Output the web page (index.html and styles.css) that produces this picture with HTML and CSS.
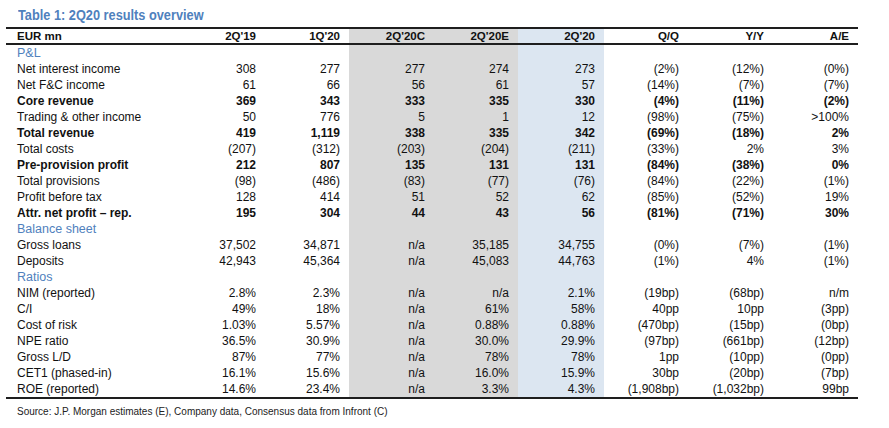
FILE: index.html
```html
<!DOCTYPE html>
<html lang="en">
<head>
<meta charset="utf-8">
<title>Table 1: 2Q20 results overview</title>
<link rel="stylesheet" href="styles.css">
</head>
<body>
<div class="title"><span class="title-text">Table 1: 2Q20 results overview</span></div>
<table class="results">
  <colgroup>
    <col class="col-label">
    <col class="col-n85">
    <col class="col-n84">
    <col class="col-n85 shade-gray">
    <col class="col-n84 shade-gray">
    <col class="col-n86 shade-blue">
    <col class="col-n84">
    <col class="col-n85">
    <col class="col-n85">
  </colgroup>
  <thead>
    <tr>
      <th class="label">EUR mn</th><th>2Q'19</th><th>1Q'20</th><th>2Q'20C</th><th>2Q'20E</th><th>2Q'20</th><th>Q/Q</th><th>Y/Y</th><th>A/E</th>
    </tr>
  </thead>
  <tbody>
    <tr class="section"><td class="label">P&amp;L</td><td></td><td></td><td></td><td></td><td></td><td></td><td></td><td></td></tr>
    <tr><td class="label">Net interest income</td><td>308</td><td>277</td><td>277</td><td>274</td><td>273</td><td>(2%)</td><td>(12%)</td><td>(0%)</td></tr>
    <tr><td class="label">Net F&amp;C income</td><td>61</td><td>66</td><td>56</td><td>61</td><td>57</td><td>(14%)</td><td>(7%)</td><td>(7%)</td></tr>
    <tr class="strong"><td class="label">Core revenue</td><td>369</td><td>343</td><td>333</td><td>335</td><td>330</td><td>(4%)</td><td>(11%)</td><td>(2%)</td></tr>
    <tr><td class="label">Trading &amp; other income</td><td>50</td><td>776</td><td>5</td><td>1</td><td>12</td><td>(98%)</td><td>(75%)</td><td>&gt;100%</td></tr>
    <tr class="strong"><td class="label">Total revenue</td><td>419</td><td>1,119</td><td>338</td><td>335</td><td>342</td><td>(69%)</td><td>(18%)</td><td>2%</td></tr>
    <tr><td class="label">Total costs</td><td>(207)</td><td>(312)</td><td>(203)</td><td>(204)</td><td>(211)</td><td>(33%)</td><td>2%</td><td>3%</td></tr>
    <tr class="strong"><td class="label">Pre-provision profit</td><td>212</td><td>807</td><td>135</td><td>131</td><td>131</td><td>(84%)</td><td>(38%)</td><td>0%</td></tr>
    <tr><td class="label">Total provisions</td><td>(98)</td><td>(486)</td><td>(83)</td><td>(77)</td><td>(76)</td><td>(84%)</td><td>(22%)</td><td>(1%)</td></tr>
    <tr><td class="label">Profit before tax</td><td>128</td><td>414</td><td>51</td><td>52</td><td>62</td><td>(85%)</td><td>(52%)</td><td>19%</td></tr>
    <tr class="strong"><td class="label">Attr. net profit – rep.</td><td>195</td><td>304</td><td>44</td><td>43</td><td>56</td><td>(81%)</td><td>(71%)</td><td>30%</td></tr>
    <tr class="section"><td class="label">Balance sheet</td><td></td><td></td><td></td><td></td><td></td><td></td><td></td><td></td></tr>
    <tr><td class="label">Gross loans</td><td>37,502</td><td>34,871</td><td>n/a</td><td>35,185</td><td>34,755</td><td>(0%)</td><td>(7%)</td><td>(1%)</td></tr>
    <tr><td class="label">Deposits</td><td>42,943</td><td>45,364</td><td>n/a</td><td>45,083</td><td>44,763</td><td>(1%)</td><td>4%</td><td>(1%)</td></tr>
    <tr class="section"><td class="label">Ratios</td><td></td><td></td><td></td><td></td><td></td><td></td><td></td><td></td></tr>
    <tr><td class="label">NIM (reported)</td><td>2.8%</td><td>2.3%</td><td>n/a</td><td>n/a</td><td>2.1%</td><td>(19bp)</td><td>(68bp)</td><td>n/m</td></tr>
    <tr><td class="label">C/I</td><td>49%</td><td>18%</td><td>n/a</td><td>61%</td><td>58%</td><td>40pp</td><td>10pp</td><td>(3pp)</td></tr>
    <tr><td class="label">Cost of risk</td><td>1.03%</td><td>5.57%</td><td>n/a</td><td>0.88%</td><td>0.88%</td><td>(470bp)</td><td>(15bp)</td><td>(0bp)</td></tr>
    <tr><td class="label">NPE ratio</td><td>36.5%</td><td>30.9%</td><td>n/a</td><td>30.0%</td><td>29.9%</td><td>(97bp)</td><td>(661bp)</td><td>(12bp)</td></tr>
    <tr><td class="label">Gross L/D</td><td>87%</td><td>77%</td><td>n/a</td><td>78%</td><td>78%</td><td>1pp</td><td>(10pp)</td><td>(0pp)</td></tr>
    <tr><td class="label">CET1 (phased-in)</td><td>16.1%</td><td>15.6%</td><td>n/a</td><td>16.0%</td><td>15.9%</td><td>30bp</td><td>(20bp)</td><td>(7bp)</td></tr>
    <tr class="last"><td class="label">ROE (reported)</td><td>14.6%</td><td>23.4%</td><td>n/a</td><td>3.3%</td><td>4.3%</td><td>(1,908bp)</td><td>(1,032bp)</td><td>99bp</td></tr>
  </tbody>
</table>
<p class="source">Source: J.P. Morgan estimates (E), Company data, Consensus data from Infront (C)</p>
</body>
</html>
```
FILE: styles.css
```css
html, body {
  margin: 0;
  padding: 0;
  background: #ffffff;
}

body {
  font-family: "Liberation Sans", Arial, sans-serif;
  color: #111111;
  width: 889px;
  height: 428px;
  overflow: hidden;
}

.title {
  height: 18px;
  padding: 6px 0 3px 18px;
  line-height: 18px;
  white-space: nowrap;
}

.title-text {
  display: inline-block;
  font-size: 14.5px;
  font-weight: bold;
  color: #4f81bd;
  transform: scaleX(0.88);
  transform-origin: left center;
}

.results {
  margin-left: 6px;
  width: 852px;
  table-layout: fixed;
  border-collapse: separate;
  border-spacing: 0;
  font-size: 12px;
}

.col-label { width: 174px; }
.col-n84 { width: 84px; }
.col-n85 { width: 85px; }
.col-n86 { width: 86px; }

.shade-gray { background: #d9d9d9; }
.shade-blue { background: #dce6f1; }

.results th,
.results td {
  padding: 0 9px 0 0;
  text-align: right;
  white-space: nowrap;
  overflow: visible;
}

.results th {
  font-size: 11.5px;
  font-weight: bold;
  height: 14px;
  line-height: 14px;
  border-top: 2px solid #1e1e1e;
  border-bottom: 2px solid #1e1e1e;
  color: #111;
}

.results td {
  height: 16px;
  line-height: 16px;
}

.results .label {
  text-align: left;
  padding-left: 11px;
  padding-right: 0;
}

.section .label {
  color: #4f81bd;
  font-size: 12.5px;
}

.strong td {
  font-weight: bold;
}

.last td {
  border-bottom: 2px solid #1e1e1e;
}

.source {
  margin: 6px 0 0 17px;
  font-size: 10px;
  line-height: 14px;
  color: #222;
}
```
